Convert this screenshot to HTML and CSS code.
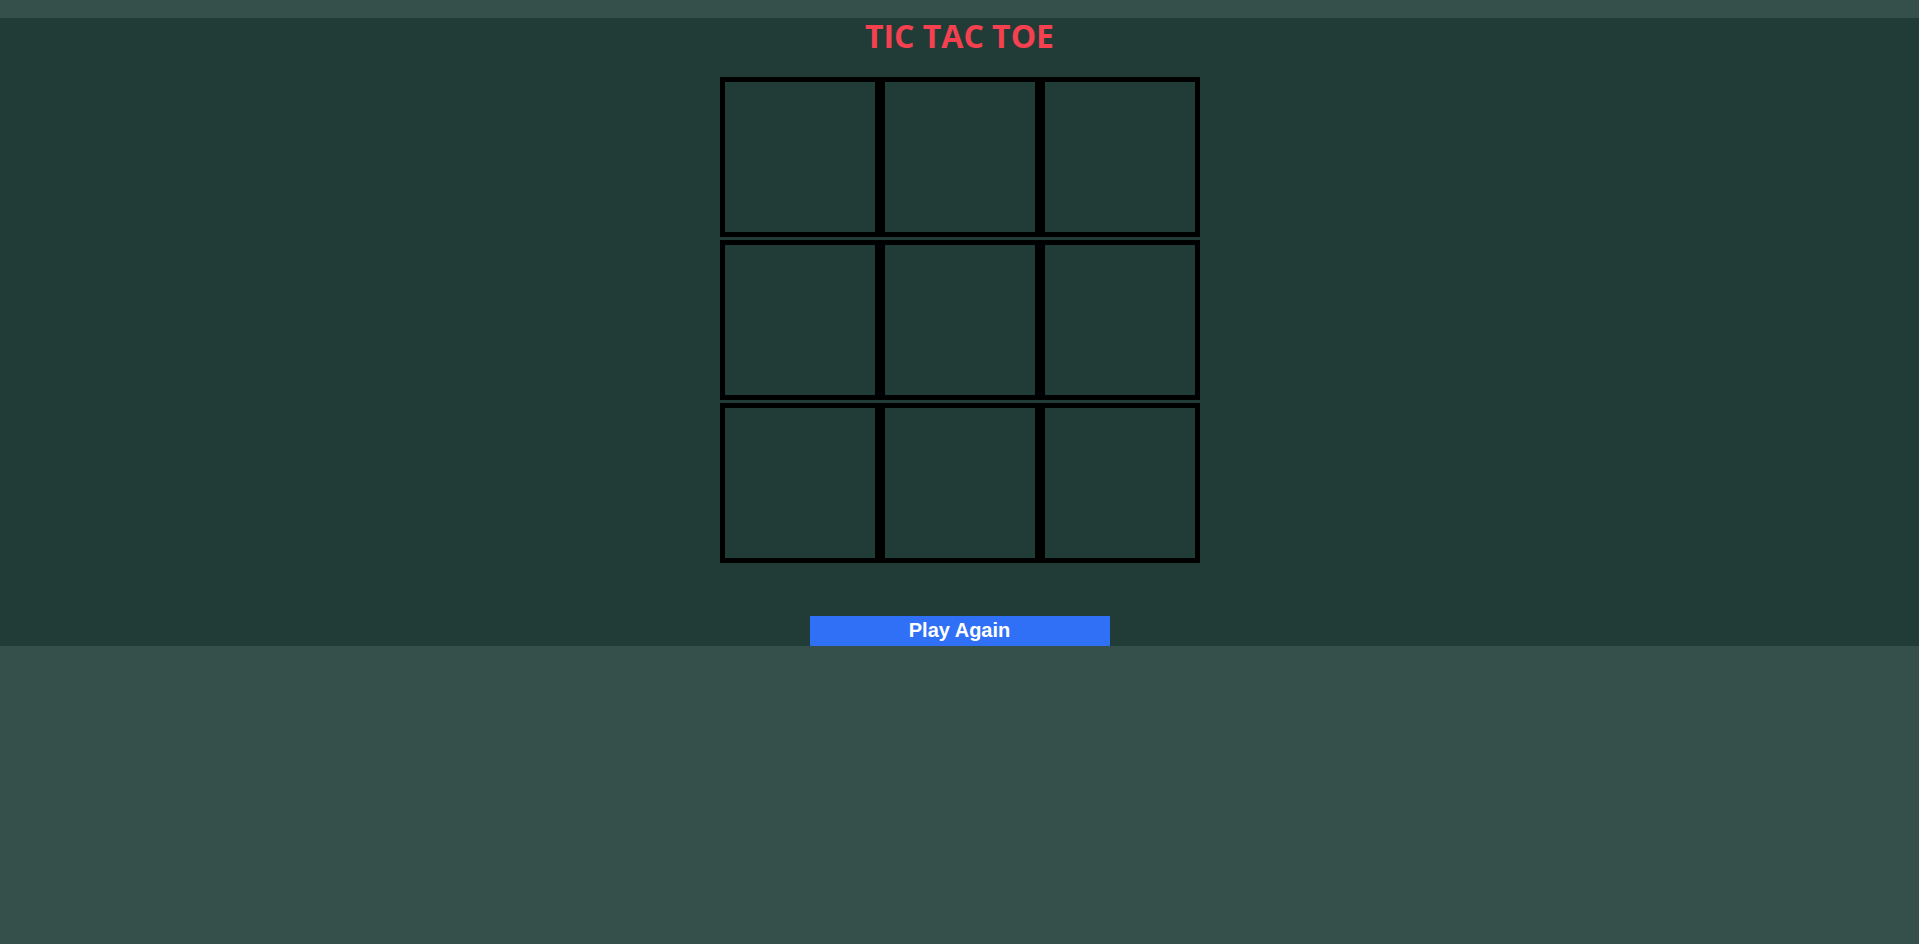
FILE: index.html
```html
<!DOCTYPE html>
<html>
<head>
<meta charset="utf-8">
<link rel="stylesheet" href="styles.css">
</head>
<body>
<main class="game">
  <h1 class="title">TIC TAC TOE</h1>
  <div class="board">
    <div class="row"><div class="cell"></div><div class="cell"></div><div class="cell"></div></div>
    <div class="row"><div class="cell"></div><div class="cell"></div><div class="cell"></div></div>
    <div class="row"><div class="cell"></div><div class="cell"></div><div class="cell"></div></div>
  </div>
  <button class="again">Play Again</button>
</main>
</body>
</html>
```
FILE: styles.css
```css
html, body {
  margin: 0;
  padding: 0;
}
body {
  background: #35504a;
  min-height: 944px;
}
.game {
  margin-top: 18px;
  background: #213b37;
  height: 628px;
  display: flex;
  flex-direction: column;
  align-items: center;
}
.title {
  margin: 2px 0 0;
  font-family: "Open Sans", "Noto Sans", sans-serif;
  font-weight: 700;
  font-size: 32px;
  line-height: 32px;
  color: #f5404f;
}
.board {
  margin-top: 25px;
  display: flex;
  flex-direction: column;
  gap: 3px;
}
.row {
  display: flex;
}
.cell {
  width: 160px;
  height: 160px;
  box-sizing: border-box;
  border: 5px solid #000;
}
.again {
  margin-top: 53px;
  width: 300px;
  height: 30px;
  border: none;
  padding: 0 0 2px;
  background: #3070f6;
  color: #fff;
  font-family: "Liberation Sans", Arial, sans-serif;
  font-weight: 700;
  font-size: 20px;
}
```
